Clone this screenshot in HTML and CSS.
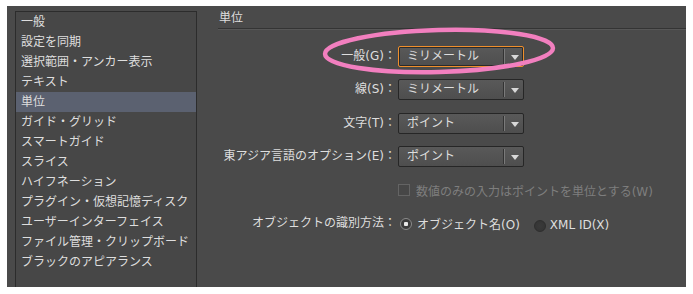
FILE: index.html
```html
<!DOCTYPE html>
<html>
<head>
  <title>環境設定 - 単位</title>
  <link rel="stylesheet" href="styles.css">
</head>
<body>
  <div class="dialog">
    <!-- Category list -->
    <ul class="category-list">
      <li>一般</li>
      <li>設定を同期</li>
      <li>選択範囲・アンカー表示</li>
      <li>テキスト</li>
      <li class="selected">単位</li>
      <li>ガイド・グリッド</li>
      <li>スマートガイド</li>
      <li>スライス</li>
      <li>ハイフネーション</li>
      <li>プラグイン・仮想記憶ディスク</li>
      <li>ユーザーインターフェイス</li>
      <li>ファイル管理・クリップボード</li>
      <li>ブラックのアピアランス</li>
    </ul>

    <!-- Units panel -->
    <div class="panel">
      <h2 class="panel-title">単位</h2>
      <div class="form">
        <label class="field-label">一般(G)：</label>
        <div class="select focused">
          <span class="select-value">ミリメートル</span>
          <span class="select-arrow"></span>
        </div>

        <label class="field-label">線(S)：</label>
        <div class="select">
          <span class="select-value">ミリメートル</span>
          <span class="select-arrow"></span>
        </div>

        <label class="field-label">文字(T)：</label>
        <div class="select">
          <span class="select-value">ポイント</span>
          <span class="select-arrow"></span>
        </div>

        <label class="field-label">東アジア言語のオプション(E)：</label>
        <div class="select">
          <span class="select-value">ポイント</span>
          <span class="select-arrow"></span>
        </div>

        <span></span>
        <div class="checkbox-row">
          <span class="checkbox"></span>
          <span>数値のみの入力はポイントを単位とする(W)</span>
        </div>

        <label class="field-label">オブジェクトの識別方法：</label>
        <div class="radio-row">
          <span class="radio checked"></span>
          <span>オブジェクト名(O)</span>
          <span class="radio second"></span>
          <span class="xml">XML ID(X)</span>
        </div>
      </div>

      <!-- annotation ring -->
      <svg class="highlight-ring" width="240" height="52" viewBox="0 0 240 52">
        <ellipse cx="120" cy="26" rx="114" ry="21" fill="none" stroke="#f27fbf" stroke-width="4.5" transform="rotate(-1.5 120 26)"/>
      </svg>
    </div>
  </div>
</body>
</html>
```

FILE: styles.css
```css
body {
  margin: 0;
  background-color: #fff;
  font-family: "DejaVu Sans", "Noto Sans CJK JP", sans-serif;
  font-size: 12px;
  color: #dedede;
}

.dialog {
  display: flex;
  margin: 6px 0 0 7px;
  width: 679px;
  height: 281px;
  background-color: #4a4a4a;
  overflow: hidden;
}

.category-list {
  list-style-type: none;
  margin: 5px 0 0 8px;
  padding: 0;
  width: 180px;
  height: 290px;
  border: 1px solid #2c2c2c;
  background-color: #474747;
}

.category-list li {
  height: 20px;
  line-height: 20px;
  padding-left: 5px;
  white-space: nowrap;
}

.category-list li.selected {
  background-color: #5b6170;
}

.panel {
  position: relative;
  flex: 1;
  margin-left: 21px;
}

.panel-title {
  margin: 0;
  padding: 3px 0 0 1px;
  height: 19px;
  line-height: 19px;
  font-size: 12px;
  font-weight: normal;
  border-bottom: 1px solid #343434;
  box-shadow: 0 1px 0 #575757;
}

.form {
  display: grid;
  grid-template-columns: 179px auto;
  grid-auto-rows: 21px;
  row-gap: 12.5px;
  justify-content: start;
  margin: 16.5px 0 0 1px;
}

.field-label {
  text-align: right;
  line-height: 21px;
  padding-right: 2px;
  white-space: nowrap;
}

.select {
  display: flex;
  align-items: center;
  width: 124px;
  height: 19px;
  border: 1px solid #262626;
  border-radius: 2px;
  background: linear-gradient(#595959, #4e4e4e);
}

.select.focused {
  border-color: #ef8f2c;
  box-shadow: inset 0 0 0 1px #2a2a2a;
}

.select-value {
  flex: 1;
  padding-left: 8px;
  line-height: 19px;
}

.select-arrow {
  width: 18px;
  height: 15px;
  border-left: 1px solid #7a7a7a;
  box-shadow: -1px 0 0 #333;
  position: relative;
}

.select-arrow::after {
  content: "";
  position: absolute;
  left: 6px;
  top: 6px;
  border-left: 4px solid transparent;
  border-right: 4px solid transparent;
  border-top: 5px solid #d8d8d8;
}

.checkbox-row {
  display: flex;
  align-items: center;
  gap: 6px;
  color: #7e7e7e;
  white-space: nowrap;
}

.checkbox {
  width: 10px;
  height: 10px;
  border: 1px solid #646464;
  background-color: #474747;
}

.radio-row {
  display: flex;
  align-items: center;
  white-space: nowrap;
}

.radio {
  width: 10px;
  height: 10px;
  border-radius: 50%;
  border: 1px solid #2e2e2e;
  background: radial-gradient(#3a3a3a, #333);
  margin-left: 2px;
  margin-right: 5px;
}

.radio.checked {
  border-color: #8a8a8a;
  background: radial-gradient(circle, #e8e8e8 0, #e8e8e8 2px, #3c3c3c 2.5px);
}

.radio.second {
  margin-left: 14px;
  margin-right: 4px;
  margin-top: 4px;
}

.xml {
  margin-top: 3px;
}

.highlight-ring {
  position: absolute;
  left: 101px;
  top: 19px;
  pointer-events: none;
}
```
